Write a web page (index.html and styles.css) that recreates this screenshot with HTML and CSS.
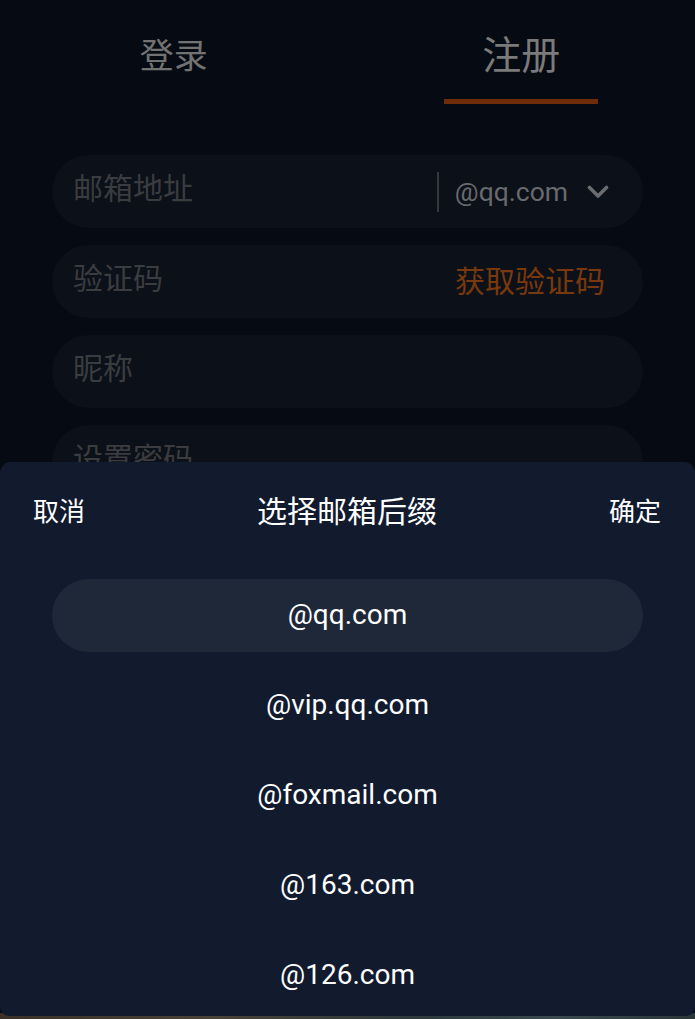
FILE: index.html
```html
<!DOCTYPE html>
<html lang="zh-CN">
<head>
<meta charset="utf-8">
<title>注册</title>
<link rel="stylesheet" href="styles.css">
</head>
<body>
<div class="page">
  <div class="tabs">
    <div class="tab"><span class="tab-label">登录</span></div>
    <div class="tab active"><span class="tab-label">注册</span><span class="tab-bar"></span></div>
  </div>
  <div class="form">
    <div class="field">
      <span class="ph">邮箱地址</span>
      <div class="suffix">
        <span class="divider"></span>
        <span class="suffix-text">@qq.com</span>
        <svg class="chev" width="22" height="14" viewBox="0 0 22 14"><path d="M2.5 2.5 L11 11 L19.5 2.5" fill="none" stroke="#6a6c70" stroke-width="3.6" stroke-linecap="round" stroke-linejoin="round"/></svg>
      </div>
    </div>
    <div class="field">
      <span class="ph">验证码</span>
      <span class="code-btn">获取验证码</span>
    </div>
    <div class="field">
      <span class="ph">昵称</span>
    </div>
    <div class="field">
      <span class="ph">设置密码</span>
    </div>
  </div>
</div>
<div class="strip"></div>
<div class="sheet">
  <div class="sheet-head">
    <span class="sheet-btn">取消</span>
    <span class="sheet-title">选择邮箱后缀</span>
    <span class="sheet-btn">确定</span>
  </div>
  <div class="options">
    <div class="option selected">@qq.com</div>
    <div class="option">@vip.qq.com</div>
    <div class="option">@foxmail.com</div>
    <div class="option">@163.com</div>
    <div class="option">@126.com</div>
  </div>
</div>
</body>
</html>
```
FILE: styles.css
```css
html, body {
  margin: 0;
  padding: 0;
  height: 100%;
  overflow: hidden;
}
body {
  background: #060a12;
  font-family: Roboto, "Noto Sans CJK SC", sans-serif;
  color: #fff;
}
.page {
  padding-top: 34px;
}
.tabs {
  display: flex;
  align-items: flex-start;
}
.tab {
  flex: 1;
  display: flex;
  flex-direction: column;
  align-items: center;
}
.tab-label {
  height: 44px;
  line-height: 44px;
  font-size: 34px;
  color: #727272;
}
.tab.active .tab-label {
  font-size: 39px;
  color: #7a7a7a;
}
.tab-bar {
  margin-top: 21px;
  width: 154px;
  height: 5px;
  background: #6e2d08;
}
.form {
  margin: 51px 52px 0;
  display: flex;
  flex-direction: column;
  gap: 17px;
}
.field {
  height: 73px;
  border-radius: 37px;
  background: #0c1018;
  display: flex;
  align-items: center;
  padding: 0 36px 0 21px;
}
.ph {
  flex: 1;
  font-size: 30px;
  color: #3a3c40;
  margin-top: -12px;
}
.suffix {
  display: flex;
  align-items: center;
  margin-right: -2px;
}
.divider {
  width: 2px;
  height: 40px;
  background: #35383d;
  margin-right: 16px;
}
.suffix-text {
  font-size: 26.5px;
  color: #686a6e;
}
.chev {
  margin-left: 19px;
}
.code-btn {
  font-size: 30px;
  color: #7a380d;
  margin-top: -6px;
  margin-right: 2px;
}
.strip {
  position: fixed;
  left: 0;
  right: 0;
  bottom: 0;
  height: 6px;
  background: linear-gradient(90deg, #3b3128 0%, #4a4236 30%, #2e3a3c 60%, #3a4a4e 80%, #2b3638 100%);
}
.sheet {
  position: fixed;
  left: 0;
  right: 0;
  top: 462px;
  bottom: 3px;
  background: #121a2d;
  border-radius: 11px 11px 9px 9px;
  display: flex;
  flex-direction: column;
}
.sheet-head {
  height: 94px;
  display: flex;
  align-items: center;
  justify-content: space-between;
  padding: 0 34px 0 33px;
}
.sheet-btn {
  font-size: 26px;
  color: #fff;
}
.sheet-title {
  font-size: 30px;
  color: #fff;
}
.options {
  margin: 23px 52px 0;
  display: flex;
  flex-direction: column;
  gap: 17px;
}
.option {
  height: 73px;
  border-radius: 37px;
  display: flex;
  align-items: center;
  justify-content: center;
  font-size: 28px;
  color: #fff;
  padding-bottom: 2px;
  box-sizing: border-box;
}
.option.selected {
  background: #1f2839;
}
```
